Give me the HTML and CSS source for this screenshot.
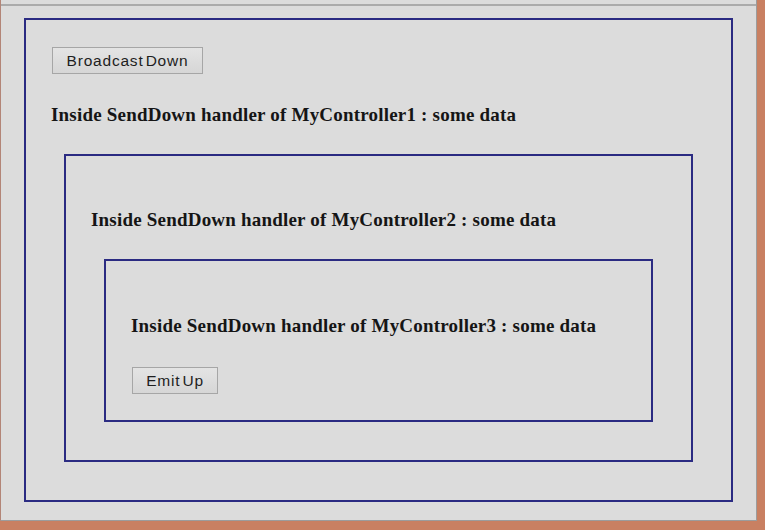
FILE: index.html
```html
<!DOCTYPE html>
<html>
<head>
<meta charset="utf-8">
<link rel="stylesheet" href="styles.css">
</head>
<body>
<div class="frame">
  <div class="topline"></div>
  <div class="ctrl ctrl1">
    <button class="btn btn-down">Broadcast Down</button>
    <div class="msg msg1">Inside SendDown handler of MyController1 : some data</div>
    <div class="ctrl ctrl2">
      <div class="msg msg2">Inside SendDown handler of MyController2 : some data</div>
      <div class="ctrl ctrl3">
        <div class="msg msg3">Inside SendDown handler of MyController3 : some data</div>
        <button class="btn btn-up">Emit Up</button>
      </div>
    </div>
  </div>
</div>
</body>
</html>
```

FILE: styles.css
```css
html, body {
  margin: 0;
  padding: 0;
}
body {
  width: 765px;
  height: 530px;
  overflow: hidden;
  background: #c98062;
  font-family: "Liberation Serif", "Times New Roman", serif;
}
.frame {
  width: 755px;
  height: 520px;
  background: #dcdcdc;
  border-left: 1px solid #b38577;
  border-right: 1px solid #9c9c9c;
  border-bottom: 1px solid #9c9c9c;
  overflow: hidden;
}
.topline {
  margin-top: 4px;
  height: 2px;
  background: #ababab;
}
.ctrl {
  border: 2px solid #2b2b82;
  box-sizing: border-box;
  padding: 0 25px 25px 25px;
}
.ctrl1 {
  width: 709px;
  height: 484px;
  margin: 12px 0 0 23px;
  padding-top: 27px;
}
.ctrl2 {
  margin: 28px 13px 0 13px;
  height: 308px;
  padding-top: 53px;
}
.ctrl3 {
  margin: 28px 13px 0 13px;
  height: 163px;
  padding-top: 54px;
}
.msg {
  font-size: 19px;
  line-height: 22px;
  font-weight: bold;
  letter-spacing: 0.2px;
  color: #151515;
  white-space: nowrap;
}
.msg1 {
  margin-top: 30px;
}
.btn {
  display: block;
  box-sizing: border-box;
  height: 27px;
  margin: 0 0 0 1px;
  padding: 0;
  border: 1px solid #a6a6a6;
  background: linear-gradient(#e4e4e4, #d6d6d6);
  font-family: "Liberation Sans", Arial, sans-serif;
  font-size: 15.5px;
  letter-spacing: 0.8px;
  word-spacing: -3px;
  color: #1e1e1e;
}
.btn-down {
  width: 151px;
}
.btn-up {
  width: 86px;
  margin-top: 30px;
}
```
